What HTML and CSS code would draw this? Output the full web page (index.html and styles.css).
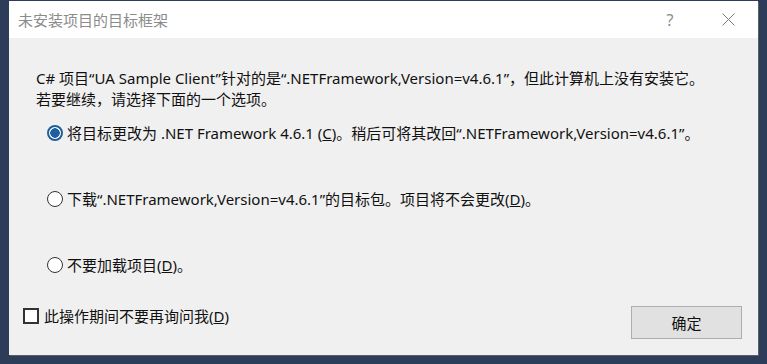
FILE: index.html
```html
<!doctype html>
<html>
    <head>
        <title>未安装项目的目标框架</title>
        <meta charset="UTF-8">
        <link rel="stylesheet" href="styles.css">
    </head>

    <body>
        <!--Dialog Start-->
        <div class="dialog">
            <div class="titlebar">
                <span class="title">未安装项目的目标框架</span>
                <span class="help">?</span>
                <span class="close">
                    <svg width="13" height="13" viewBox="0 0 13 13">
                        <path d="M0.5 0.5 L12.5 12.5 M12.5 0.5 L0.5 12.5" stroke="#7a7a7a" stroke-width="1" fill="none"/>
                    </svg>
                </span>
            </div>

            <div class="content">
                <p class="message">C# 项目“UA Sample Client”针对的是“.NETFramework,Version=v4.6.1”，但此计算机上没有安装它。<br>若要继续，请选择下面的一个选项。</p>

                <div class="options">
                    <div class="option">
                        <span class="radio checked"></span>
                        <span>将目标更改为 .NET Framework 4.6.1 (<u>C</u>)。稍后可将其改回“.NETFramework,Version=v4.6.1”。</span>
                    </div>
                    <div class="option">
                        <span class="radio"></span>
                        <span>下载“.NETFramework,Version=v4.6.1”的目标包。项目将不会更改(<u>D</u>)。</span>
                    </div>
                    <div class="option">
                        <span class="radio"></span>
                        <span>不要加载项目(<u>D</u>)。</span>
                    </div>
                </div>
            </div>

            <div class="footer">
                <label class="check">
                    <span class="box"></span>
                    <span>此操作期间不要再询问我(<u>D</u>)</span>
                </label>
                <button class="ok">确定</button>
            </div>
        </div>
        <!--Dialog End-->
    </body>
</html>
```

FILE: styles.css
```css
body{
    box-sizing: border-box;
    margin: 0;
    padding: 1px 0 0 9px;
    height: 364px;
    background: #2d3c59;
    font-family: "Noto Sans", "Noto Sans CJK SC", sans-serif;
    font-size: 15px;
    color: #111;
    overflow: hidden;
}

.dialog{
    display: flex;
    flex-direction: column;
    width: 749px;
    height: 354px;
    background: #f0f0f0;
    box-shadow: 1px 1px 0 #5c5f66;
}

/* Title bar */
.titlebar{
    display: flex;
    align-items: center;
    height: 37px;
    padding-left: 9px;
    background: white;
}
.titlebar .title{
    flex: 1;
    color: #8c8c8c;
    font-family: "Noto Sans CJK SC", sans-serif;
}
.titlebar .help{
    width: 20px;
    margin-right: 42px;
    color: #8c8c8c;
    font-size: 16px;
    text-align: center;
}
.titlebar .close{
    display: flex;
    margin-right: 23px;
}
/* Title bar */

.content{
    padding: 30px 0 0 27px;
}

.message{
    margin: 0;
    line-height: 21px;
}

.options{
    display: flex;
    flex-direction: column;
    gap: 45px;
    margin-top: 12px;
    padding-left: 11px;
}

.option{
    display: flex;
    align-items: center;
    gap: 4px;
    height: 21px;
}

.radio{
    box-sizing: border-box;
    flex: none;
    width: 16px;
    height: 16px;
    border: 1.5px solid #333;
    border-radius: 50%;
    background: white;
}
.radio.checked{
    border: 2px solid #1f5f9c;
    background: radial-gradient(circle, #1f5f9c 0, #1f5f9c 4.5px, white 5px);
}

/* Footer */
.footer{
    display: flex;
    align-items: center;
    justify-content: space-between;
    margin-top: auto;
    padding: 0 16px 16px 14px;
}

.check{
    display: flex;
    align-items: center;
    gap: 5px;
    margin-bottom: 13px;
}
.check .box{
    box-sizing: border-box;
    width: 16px;
    height: 16px;
    border: 2px solid #333;
    background: white;
}

.ok{
    width: 111px;
    height: 33px;
    border: 1px solid #adadad;
    background: #e1e1e1;
    font-family: "Noto Sans CJK SC", sans-serif;
    font-size: 15px;
    color: #111;
}
```
